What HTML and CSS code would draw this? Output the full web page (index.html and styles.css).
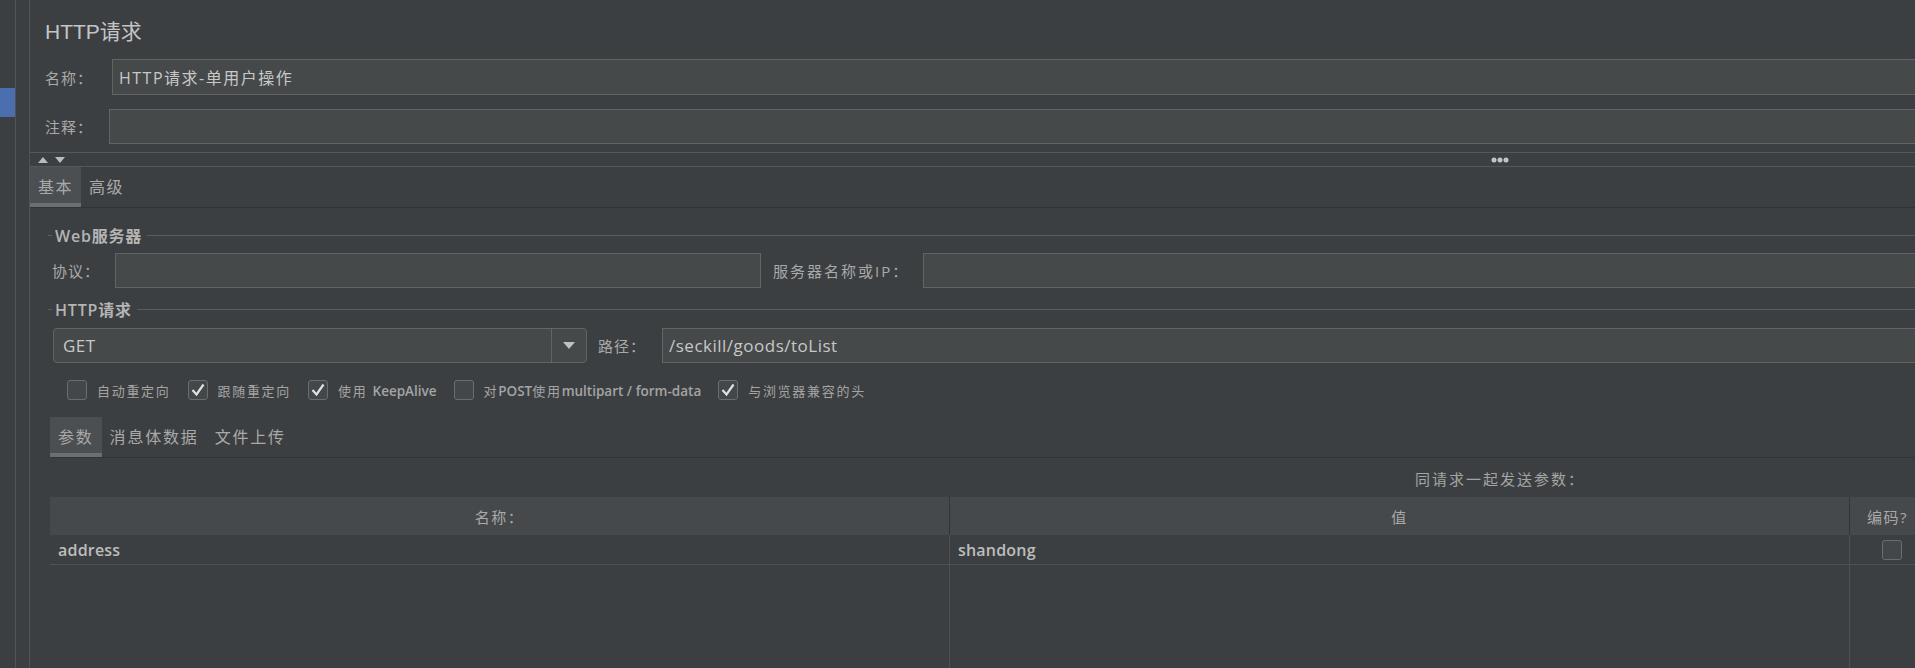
FILE: index.html
```html
<!DOCTYPE html>
<html lang="zh-CN">
<head>
<meta charset="utf-8">
<title>HTTP请求</title>
<link rel="stylesheet" href="styles.css">
</head>
<body>
<div class="app">
  <aside class="tree"><div class="tree-sel"></div></aside>
  <div class="vsplit"></div>
  <main class="main">
    <h1 class="title">HTTP请求</h1>
    <div class="field name-field">
      <span class="lbl name-lbl">名称：</span>
      <div class="input val name-val">HTTP请求-单用户操作</div>
    </div>
    <div class="field comment-field">
      <span class="lbl comment-lbl">注释：</span>
      <div class="input"></div>
    </div>
    <div class="splitter">
      <span class="arrows"><svg width="30" height="8" viewBox="0 0 30 8"><polygon points="1,7 6,1 11,7" fill="#bbbbbb"/><polygon points="18,1 28,1 23,7" fill="#bbbbbb"/></svg></span>
      <span class="dots"><svg width="18" height="6" viewBox="0 0 18 6"><circle cx="3" cy="3" r="2.5" fill="#c4c4c4"/><circle cx="9" cy="3" r="2.5" fill="#c4c4c4"/><circle cx="15" cy="3" r="2.5" fill="#c4c4c4"/></svg></span>
      <span></span>
    </div>
    <div class="tabs">
      <div class="tab active">基本</div>
      <div class="tab">高级</div>
    </div>
    <section class="group web">
      <div class="group-title"><span>Web服务器</span></div>
      <div class="row">
        <span class="lbl proto-lbl">协议：</span>
        <div class="input proto"></div>
        <span class="lbl host-lbl">服务器名称或IP：</span>
        <div class="input host"></div>
      </div>
    </section>
    <section class="group http">
      <div class="group-title"><span>HTTP请求</span></div>
      <div class="row">
        <div class="combo">
          <span class="combo-val">GET</span>
          <span class="combo-btn"><svg width="12" height="7" viewBox="0 0 12 7"><polygon points="0,0 12,0 6,7" fill="#c0c0c0"/></svg></span>
        </div>
        <span class="lbl path-lbl">路径：</span>
        <div class="input val path">/seckill/goods/toList</div>
      </div>
      <div class="checks">
        <label class="check"><span class="box"></span><span class="ctext">自动重定向</span></label>
        <label class="check"><span class="box on"><svg width="18" height="18" viewBox="0 0 18 18"><polyline points="3.5,9 7.5,13.5 14.5,3.5" fill="none" stroke="#e0e0e0" stroke-width="2.2"/></svg></span><span class="ctext">跟随重定向</span></label>
        <label class="check"><span class="box on"><svg width="18" height="18" viewBox="0 0 18 18"><polyline points="3.5,9 7.5,13.5 14.5,3.5" fill="none" stroke="#e0e0e0" stroke-width="2.2"/></svg></span><span class="ctext">使用 <b>KeepAlive</b></span></label>
        <label class="check"><span class="box"></span><span class="ctext">对<b>POST</b>使用<b>multipart / form-data</b></span></label>
        <label class="check"><span class="box on"><svg width="18" height="18" viewBox="0 0 18 18"><polyline points="3.5,9 7.5,13.5 14.5,3.5" fill="none" stroke="#e0e0e0" stroke-width="2.2"/></svg></span><span class="ctext">与浏览器兼容的头</span></label>
      </div>
    </section>
    <div class="subtabs">
      <div class="subtab active">参数</div>
      <div class="subtab">消息体数据</div>
      <div class="subtab">文件上传</div>
    </div>
    <div class="params">
      <div class="caption">同请求一起发送参数：</div>
      <div class="table">
        <div class="th">名称：</div>
        <div class="th">值</div>
        <div class="th th-enc">编码?</div>
        <div class="th">内容类型</div>
        <div class="th">包含等于?</div>
        <div class="td">address</div>
        <div class="td">shandong</div>
        <div class="td center"><span class="box"></span></div>
        <div class="td">text/plain</div>
        <div class="td center"><span class="box"></span></div>
        <div class="tf"></div>
        <div class="tf"></div>
        <div class="tf"></div>
        <div class="tf"></div>
        <div class="tf"></div>
      </div>
    </div>
  </main>
</div>
</body>
</html>
```

FILE: styles.css
```css
html, body {
  margin: 0;
  padding: 0;
}
body {
  background: #3c3f41;
  color: #bbbbbb;
  font-family: "Open Sans", "Noto Sans CJK SC", sans-serif;
  overflow: hidden;
}
.app {
  display: flex;
  width: 1915px;
  height: 668px;
  overflow: hidden;
}
.tree {
  flex: none;
  width: 15px;
  background: #3c3f41;
}
.tree-sel {
  margin-top: 88px;
  height: 29px;
  background: #4b6eaf;
}
.vsplit {
  flex: none;
  width: 13px;
  border-left: 1px solid #515456;
  border-right: 1px solid #515456;
}
.main {
  flex: none;
  width: 2940px;
  display: flex;
  flex-direction: column;
}
.main > * {
  flex: none;
}
.title {
  margin: 0;
  padding: 12px 0 0 15px;
  height: 40px;
  line-height: 40px;
  font-family: "Liberation Sans", "Noto Sans CJK SC", sans-serif;
  font-size: 21px;
  font-weight: normal;
  color: #c4c4c4;
}
.field {
  display: flex;
  align-items: center;
}
.name-field {
  margin-top: 7px;
  height: 36px;
}
.comment-field {
  margin-top: 14px;
  height: 35px;
}
.lbl {
  flex: none;
  font-size: 15px;
  letter-spacing: 1px;
  color: #a9a9a9;
  white-space: nowrap;
}
.name-lbl { padding-left: 15px; width: 67px; }
.comment-lbl { padding-left: 15px; width: 64px; }
.input {
  box-sizing: border-box;
  height: 100%;
  flex: 1;
  background: #45494a;
  border: 1px solid #646464;
  border-right: none;
  display: flex;
  align-items: center;
  padding-left: 6px;
  font-size: 16px;
  color: #c8c8c8;
  white-space: nowrap;
}
.name-val {
  letter-spacing: 1.5px;
}
.splitter {
  margin-top: 8px;
  height: 13px;
  border-top: 1px solid #55585a;
  border-bottom: 1px solid #55585a;
  display: grid;
  grid-template-columns: 1fr auto 1fr;
  align-items: center;
}
.arrows {
  display: flex;
  padding-left: 7px;
}
.dots {
  display: flex;
}
.tabs {
  display: flex;
  height: 40px;
  border-bottom: 1px solid #313335;
}
.tab {
  padding: 0 8px;
  line-height: 40px;
  font-size: 16px;
  letter-spacing: 1.5px;
  color: #a9a9a9;
}
.tab.active {
  background: #4b4f52;
  box-shadow: inset 0 -4px 0 #6b6f73;
}
.group {
  padding-left: 18px;
}
.group-title {
  display: flex;
  align-items: center;
  height: 20px;
  font-size: 16px;
  font-weight: 600;
  letter-spacing: 0.8px;
  color: #b4b4b4;
}
.group-title::before {
  content: "";
  width: 4px;
  height: 1px;
  background: #5a5d5f;
  margin-right: 3px;
}
.group-title::after {
  content: "";
  flex: 1;
  height: 1px;
  background: #5a5d5f;
  margin-left: 5px;
}
.web .group-title { margin-top: 17px; }
.http .group-title { margin-top: 11px; }
.row {
  display: flex;
  align-items: center;
  height: 35px;
}
.web .row { margin-top: 8px; }
.http .row { margin-top: 9px; }
.proto-lbl { padding-left: 4px; width: 63px; }
.input.proto { flex: none; width: 646px; border-right: 1px solid #646464; }
.host-lbl { margin-left: 12px; width: 150px; letter-spacing: 2px; }
.combo {
  flex: none;
  box-sizing: border-box;
  margin-left: 5px;
  width: 534px;
  height: 100%;
  display: flex;
  border: 1px solid #646464;
  border-radius: 4px;
  background: #45494a;
}
.combo-val {
  flex: 1;
  display: flex;
  align-items: center;
  padding-left: 9px;
  font-size: 17px;
  letter-spacing: 0.5px;
  color: #c8c8c8;
}
.combo-btn {
  flex: none;
  width: 34px;
  border-left: 1px solid #646464;
  display: flex;
  align-items: center;
  justify-content: center;
}
.path-lbl { margin-left: 11px; width: 64px; }
.path {
  font-size: 17px;
  letter-spacing: 0.5px;
}
.checks {
  display: flex;
  align-items: center;
  margin-top: 17px;
  height: 20px;
  padding-left: 19px;
}
.check {
  display: flex;
  align-items: center;
  margin-right: 17px;
}
.box {
  box-sizing: border-box;
  width: 20px;
  height: 20px;
  border: 1px solid #6a6d6f;
  border-radius: 3px;
  background: #43474a;
  display: flex;
  align-items: center;
  justify-content: center;
}
.ctext {
  margin-left: 10px;
  font-size: 13px;
  letter-spacing: 1.7px;
  color: #a4a4a4;
}
.ctext b {
  font-size: 13.5px;
  font-weight: 600;
  letter-spacing: 0;
}
.subtabs {
  display: flex;
  margin: 17px 0 0 20px;
  height: 40px;
  border-bottom: 1px solid #313335;
}
.subtab {
  padding: 0 8px;
  line-height: 40px;
  font-size: 16px;
  letter-spacing: 1.8px;
  color: #a9a9a9;
}
.subtab.active {
  background: #4b4f52;
  box-shadow: inset 0 -4px 0 #6b6f73;
}
.params {
  margin: 0 20px;
  display: flex;
  flex-direction: column;
}
.caption {
  margin-top: 11px;
  height: 20px;
  line-height: 20px;
  text-align: center;
  font-size: 15px;
  letter-spacing: 2px;
  color: #a4a4a4;
}
.table {
  margin-top: 8px;
  display: grid;
  grid-template-columns: 900px 900px 84px 506px 506px;
  grid-template-rows: 38px 30px 110px;
}
.th {
  background: #45494b;
  border-right: 1px solid #323436;
  display: flex;
  align-items: center;
  justify-content: center;
  font-size: 15px;
  letter-spacing: 1.5px;
  color: #a9a9a9;
  white-space: nowrap;
}
.th-enc {
  justify-content: flex-start;
  padding-left: 17px;
}
.td {
  box-sizing: border-box;
  border-right: 1px solid #4e5153;
  border-bottom: 1px solid #4e5153;
  display: flex;
  align-items: center;
  padding-left: 8px;
  font-size: 16px;
  font-weight: 600;
  letter-spacing: 0.2px;
  color: #bdbdbd;
}
.td.center {
  justify-content: center;
  padding-left: 0;
}
.tf {
  border-right: 1px solid #4e5153;
}
```
